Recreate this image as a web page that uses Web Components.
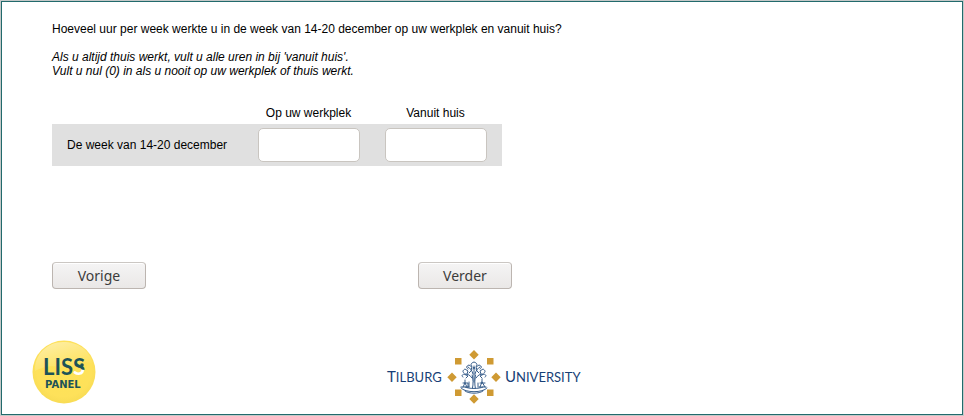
<!DOCTYPE html>
<html lang="nl">
<head>
<meta charset="utf-8">
<title>Vragenlijst</title>
<style>
body { margin: 0; background: #fff; color: #000; font: 12px/14px "Liberation Sans", Arial, sans-serif; }
</style>
</head>
<body>
<survey-page>
  <survey-question>
    Hoeveel uur per week werkte u in de week van 14-20 december op uw werkplek en vanuit huis?
    <span slot="hint">Als u altijd thuis werkt, vult u alle uren in bij 'vanuit huis'.<br>Vult u nul (0) in als u nooit op uw werkplek of thuis werkt.</span>
  </survey-question>
  <hours-table></hours-table>
  <survey-nav>
    <nav-button>Vorige</nav-button>
    <nav-button>Verder</nav-button>
  </survey-nav>
  <liss-logo slot="left"></liss-logo>
  <tilburg-logo slot="center"></tilburg-logo>
</survey-page>
<script>
function define(name, html) {
  const template = document.createElement('template');
  template.innerHTML = html;
  customElements.define(name, class extends HTMLElement {
    constructor() {
      super();
      this.attachShadow({ mode: 'open' }).append(template.content.cloneNode(true));
    }
  });
}

define('survey-page', `
<style>
:host { display: flex; flex-direction: column; box-sizing: border-box; min-height: 100vh; border: 1px solid #c4c8c8; }
.frame { flex: 1; display: flex; flex-direction: column; border: 1px solid #226a6c; padding: 20px 50px 10px; }
main { flex: 1; }
footer { display: grid; grid-template-columns: 1fr auto 1fr; align-items: end; margin: 0 -20px; }
</style>
<div class="frame">
  <main><slot></slot></main>
  <footer><slot name="left"></slot><slot name="center"></slot></footer>
</div>`);

define('survey-question', `
<style>
:host { display: block; }
p { margin: 0 0 14px; }
.hint { font-style: italic; margin-bottom: 28px; }
</style>
<p><slot></slot></p>
<p class="hint"><slot name="hint"></slot></p>`);

define('hours-table', `
<style>
:host { display: block; }
table { width: 100%; max-width: 450px; table-layout: fixed; border-collapse: collapse; }
th { font-weight: normal; padding: 0; text-align: center; }
thead th, thead td { height: 18px; vertical-align: top; padding: 0; }
.label { width: 193px; }
.end { width: 3px; }
tbody { background: #e0e0e0; }
tbody th { text-align: left; padding-left: 15px; }
td { padding: 4px 0; text-align: center; }
input { display: block; margin: 0 auto; box-sizing: border-box; width: 102px; height: 34px; border: 1px solid #c9c5c0; border-radius: 5px; background: #fff; padding: 4px 8px; font: inherit; }
</style>
<table>
  <colgroup><col class="label"><col><col><col class="end"></colgroup>
  <thead><tr><td></td><th scope="col" id="work">Op uw werkplek</th><th scope="col" id="home">Vanuit huis</th><td></td></tr></thead>
  <tbody><tr>
    <th scope="row" id="week">De week van 14-20 december</th>
    <td><input type="text" inputmode="numeric" aria-labelledby="week work"></td>
    <td><input type="text" inputmode="numeric" aria-labelledby="week home"></td>
    <td></td>
  </tr></tbody>
</table>`);

define('survey-nav', `
<style>
:host { display: flex; justify-content: space-between; max-width: 460px; margin: 96px 0 48px; }
</style>
<slot></slot>`);

define('nav-button', `
<style>
:host { display: block; }
button { display: block; box-sizing: border-box; min-width: 94px; height: 27px; padding: 0 24px; border: 1px solid #bcb5b0; border-top-color: #cbc7c3; border-radius: 4px; background: linear-gradient(#f5f4f4, #eae8e7); box-shadow: inset 0 1px #fff; color: #3c3c3c; font: 14px/25px "Noto Sans", "Open Sans", sans-serif; }
</style>
<button type="button"><slot></slot></button>`);

define('liss-logo', `
<style>:host { display: block; } svg { display: block; }
text { fill: #1d5358; }
.name { font-family: Lato, sans-serif; font-weight: bold; font-size: 22px; }
.sub { font-family: "DejaVu Sans", sans-serif; font-weight: bold; font-size: 10px; }
</style>
<svg width="64" height="64" viewBox="0 0 64 64" role="img" aria-label="LISS Panel">
  <defs>
    <radialGradient id="ball" cx=".5" cy=".45" r=".55"><stop offset="0" stop-color="#fee256"/><stop offset=".8" stop-color="#fee15a"/><stop offset="1" stop-color="#f8dc55"/></radialGradient>
    <linearGradient id="shine" x1="0" y1="0" x2=".6" y2="1"><stop offset="0" stop-color="#fff" stop-opacity=".5"/><stop offset="1" stop-color="#fff" stop-opacity="0"/></linearGradient>
    <linearGradient id="split" gradientUnits="userSpaceOnUse" x1="43" y1="18" x2="40" y2="35"><stop offset=".56" stop-color="#1d5358"/><stop offset=".62" stop-color="#fff"/></linearGradient>
  </defs>
  <circle cx="32" cy="32" r="31.5" fill="url(#ball)"/>
  <path d="M3 31C2 15 15 2 31 2c15 0 27 8 30 22C50 18 42 29 28 27 17 25 9 28 3 31Z" fill="url(#shine)"/>
  <text class="name" x="11" y="35">LIS<tspan style="fill:url(#split)">S</tspan></text>
  <circle cx="50" cy="25" r="1.800" fill="#1d5358"/>
  <text class="sub" x="13" y="48">PANEL</text>
</svg>`);

define('tilburg-logo', `
<style>:host { display: block; } svg { display: block; }
text { font-family: Lato, sans-serif; font-size: 13px; fill: #173f77; }
.cap { font-size: 15px; }
</style>
<svg width="196" height="54" viewBox="384 350 196 54" overflow="visible" role="img" aria-label="Tilburg University">
  <text x="387" y="382"><tspan class="cap">T</tspan>ILBURG</text>
  <text x="505" y="382"><tspan class="cap">U</tspan>NIVERSITY</text>
  <path fill="#cf9a33" d="M474 350l4.700 4.700-4.700 4.700-4.700-4.700ZM474 394.300l4.700 4.700-4.700 4.700-4.700-4.700ZM452 372.500l4.700 4.700-4.700 4.700-4.700-4.700ZM496 372.500l4.700 4.700-4.700 4.700-4.700-4.700ZM455 358h6.500v6.500H455ZM487 358h6.500v6.500H487ZM455 389.500h6.500v6.500H455ZM487 389.500h6.500v6.500H487Z"/>
  <g fill="none" stroke="#234c7e" stroke-width=".9" stroke-linecap="round">
    <path d="M472.500 388c1-4 .6-9-.3-13M475.300 388c-.8-4-.6-9 .2-13M474 382v-16M472 378c-2-3-4-4-7-4M476 378c2-3 4-4 7-4M473 374c-1-4-3-6-5-7M475 374c1-4 3-6 5-7"/>
    <path d="M472 366c-2-1-1-3 2-4 3 1 4 3 2 4M468 369c-2-1-2-3 1-4l3 2-1 3M480 369c2-1 2-3-1-4l-3 2 1 3M464 373c-2-1-1-3 1-4l3 2-1 3M484 373c2-1 1-3-1-4l-3 2 1 3M463 377c-2-1-1-2 1-3l4 2-2 2M485 377c2-1 1-2-1-3l-4 2 2 2M471 371l-2 2M477 371l2 2M473 369l1-2 1 2"/>
    <path d="M465 380v3l-2 4M465 383l2 4M463 383h5v4M461 387h8M482 379v3l-2 5M482 382l3 5M480 383h5M479 387h7M469 387v-5M478 387v-4"/>
    <path d="M461 388c4 5 22 5 26 0M465 387c3 2 15 2 18 0M465 391c4 3 14 3 18 0"/>
  </g>
</svg>`);
</script>
</body>
</html>
